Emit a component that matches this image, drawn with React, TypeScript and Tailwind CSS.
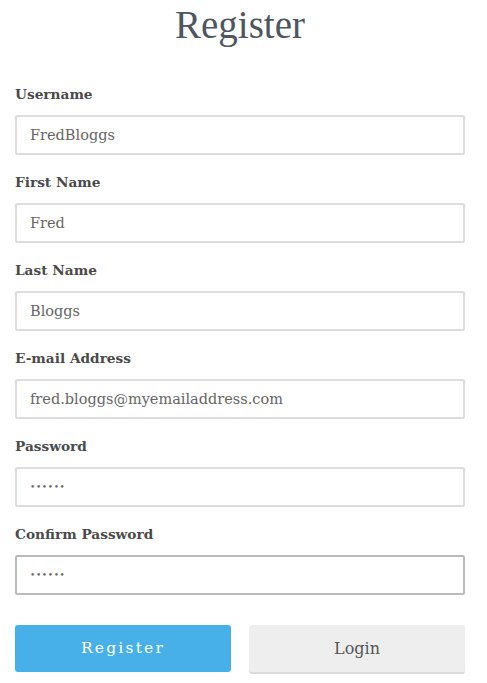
import { useState } from "react";

const fields = [
  { id: "username", label: "Username", value: "FredBloggs", type: "text" },
  { id: "first", label: "First Name", value: "Fred", type: "text" },
  { id: "last", label: "Last Name", value: "Bloggs", type: "text" },
  { id: "email", label: "E-mail Address", value: "fred.bloggs@myemailaddress.com", type: "email" },
  { id: "password", label: "Password", value: "secret", type: "password" },
  { id: "confirm", label: "Confirm Password", value: "secret", type: "password" },
];

export default function App() {
  const [values, setValues] = useState<Record<string, string>>(
    Object.fromEntries(fields.map((f) => [f.id, f.value]))
  );

  return (
    <div className="min-h-screen w-full bg-white pl-[15px] pr-[22px] font-['DejaVu_Serif',serif]">
      <h1 className="h-[50px] text-center text-[39px] leading-[50px] text-[#4d5661] font-['Liberation_Serif',serif]">
        Register
      </h1>

      <form className="mt-[32px]" onSubmit={(e) => e.preventDefault()}>
        {fields.map((f, i) => (
          <div key={f.id} className="mb-[15px]">
            <label
              htmlFor={f.id}
              className="mb-[9px] block h-6 text-[13.7px] font-bold leading-6 text-[#4a4a4a]"
            >
              {f.label}
            </label>
            <input
              id={f.id}
              type={f.type}
              value={values[f.id]}
              onChange={(e) => setValues({ ...values, [f.id]: e.target.value })}
              className={`block h-10 w-full rounded-[2px] border-2 bg-white px-[13px] text-[#666] outline-none ${
                f.type === "password" ? "text-[9px] tracking-[0.6px]" : "text-[14.5px]"
              } ${i === fields.length - 1 ? "border-[#bbbbbb]" : "border-[#dddddd]"}`}
            />
          </div>
        ))}

        <div className="mt-[30px] flex gap-[18px]">
          <button
            type="submit"
            className="h-[47px] flex-1 rounded-[3px] bg-[#47b0e9] text-[15.5px] tracking-[2.2px] text-white"
          >
            Register
          </button>
          <button
            type="button"
            className="h-[49px] flex-1 rounded-[3px] border-b-2 border-[#dcdcdc] bg-[#eeeeee] text-[16px] text-[#555]"
          >
            Login
          </button>
        </div>
      </form>
    </div>
  );
}
